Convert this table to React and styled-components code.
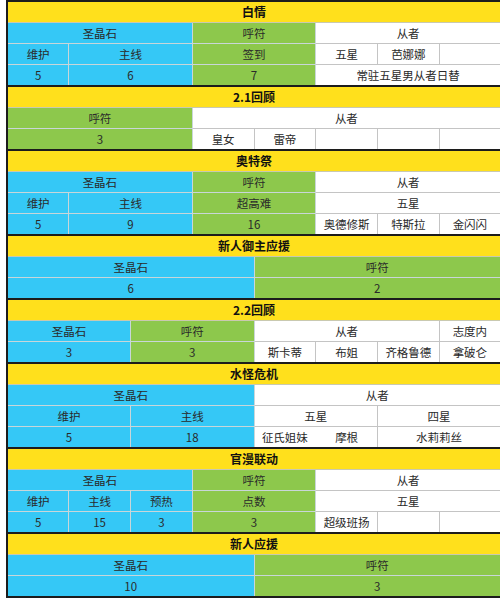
import React from 'react';
import styled, { createGlobalStyle } from 'styled-components';

const GlobalStyle = createGlobalStyle`
  html, body {
    margin: 0;
    padding: 0;
    background: #ffffff;
  }
  body {
    font-family: "Noto Sans CJK SC", "Noto Sans", sans-serif;
  }
`;

const tones = {
  blue: '#35c8f6',
  green: '#8dc84c',
  white: '#ffffff',
  yellow: '#ffe01c',
};

const Sheet = styled.table`
  margin: 0 0 0 6px;
  width: 494px;
  table-layout: fixed;
  border-collapse: collapse;
  border: 2px solid #1c1c1c;
`;

const Col = styled.col`
  width: 61.75px;
`;

const Title = styled.td`
  height: 20px;
  padding: 0;
  background: ${tones.yellow};
  border-top: 2px solid #1c1c1c;
  border-bottom: 1px solid #c9c9b0;
  text-align: center;
  font-size: 12px;
  font-weight: 700;
  line-height: 20px;
  color: #111;
`;

const Cell = styled.td`
  height: 20px;
  padding: 0;
  background: ${(p) => tones[p.$tone]};
  border: 1px solid ${(p) => (p.$tone === 'white' ? '#c4c4c4' : '#c9d6d9')};
  ${(p) => (p.$seamless ? 'border-right-color: #ffffff;' : '')}
  text-align: center;
  font-size: 11.5px;
  line-height: 20px;
  color: #2a2a2a;
  white-space: nowrap;
  overflow: hidden;
`;

const b = (text, span = 1, extra = {}) => ({ text, span, tone: 'blue', ...extra });
const g = (text, span = 1, extra = {}) => ({ text, span, tone: 'green', ...extra });
const w = (text, span = 1, extra = {}) => ({ text, span, tone: 'white', ...extra });

const sections = [
  {
    title: '白情',
    rows: [
      [b('圣晶石', 3), g('呼符', 2), w('从者', 3)],
      [b('维护'), b('主线', 2), g('签到', 2), w('五星'), w('芭娜娜'), w('')],
      [b('5'), b('6', 2), g('7', 2), w('常驻五星男从者日替', 3)],
    ],
  },
  {
    title: '2.1回顾',
    rows: [
      [g('呼符', 3), w('从者', 5)],
      [g('3', 3), w('皇女'), w('雷帝'), w(''), w(''), w('')],
    ],
  },
  {
    title: '奥特祭',
    rows: [
      [b('圣晶石', 3), g('呼符', 2), w('从者', 3)],
      [b('维护'), b('主线', 2), g('超高难', 2), w('五星', 3)],
      [b('5'), b('9', 2), g('16', 2), w('奥德修斯'), w('特斯拉'), w('金闪闪')],
    ],
  },
  {
    title: '新人御主应援',
    rows: [
      [b('圣晶石', 4), g('呼符', 4)],
      [b('6', 4), g('2', 4)],
    ],
  },
  {
    title: '2.2回顾',
    rows: [
      [b('圣晶石', 2), g('呼符', 2), w('从者', 3), w('志度内')],
      [b('3', 2), g('3', 2), w('斯卡蒂'), w('布姐'), w('齐格鲁德'), w('拿破仑')],
    ],
  },
  {
    title: '水怪危机',
    rows: [
      [b('圣晶石', 4), w('从者', 4)],
      [b('维护', 2), b('主线', 2), w('五星', 2), w('四星', 2)],
      [b('5', 2), b('18', 2), w('征氏姐妹', 1, { seamless: true }), w('摩根'), w('水莉莉丝', 2)],
    ],
  },
  {
    title: '官漫联动',
    rows: [
      [b('圣晶石', 3), g('呼符', 2), w('从者', 3)],
      [b('维护'), b('主线'), b('预热'), g('点数', 2), w('五星', 3)],
      [b('5'), b('15'), b('3'), g('3', 2), w('超级班扬'), w(''), w('')],
    ],
  },
  {
    title: '新人应援',
    rows: [
      [b('圣晶石', 4), g('呼符', 4)],
      [b('10', 4), g('3', 4)],
    ],
  },
];

const Section = ({ title, rows }) => (
  <tbody>
    <tr>
      <Title colSpan={8}>{title}</Title>
    </tr>
    {rows.map((row, i) => (
      <tr key={i}>
        {row.map((cell, j) => (
          <Cell key={j} colSpan={cell.span} $tone={cell.tone} $seamless={cell.seamless}>
            {cell.text}
          </Cell>
        ))}
      </tr>
    ))}
  </tbody>
);

const App = () => (
  <>
    <GlobalStyle />
    <Sheet>
      <colgroup>
        {Array.from({ length: 8 }).map((_, i) => (
          <Col key={i} />
        ))}
      </colgroup>
      {sections.map((s) => (
        <Section key={s.title} title={s.title} rows={s.rows} />
      ))}
    </Sheet>
  </>
);

export default App;
